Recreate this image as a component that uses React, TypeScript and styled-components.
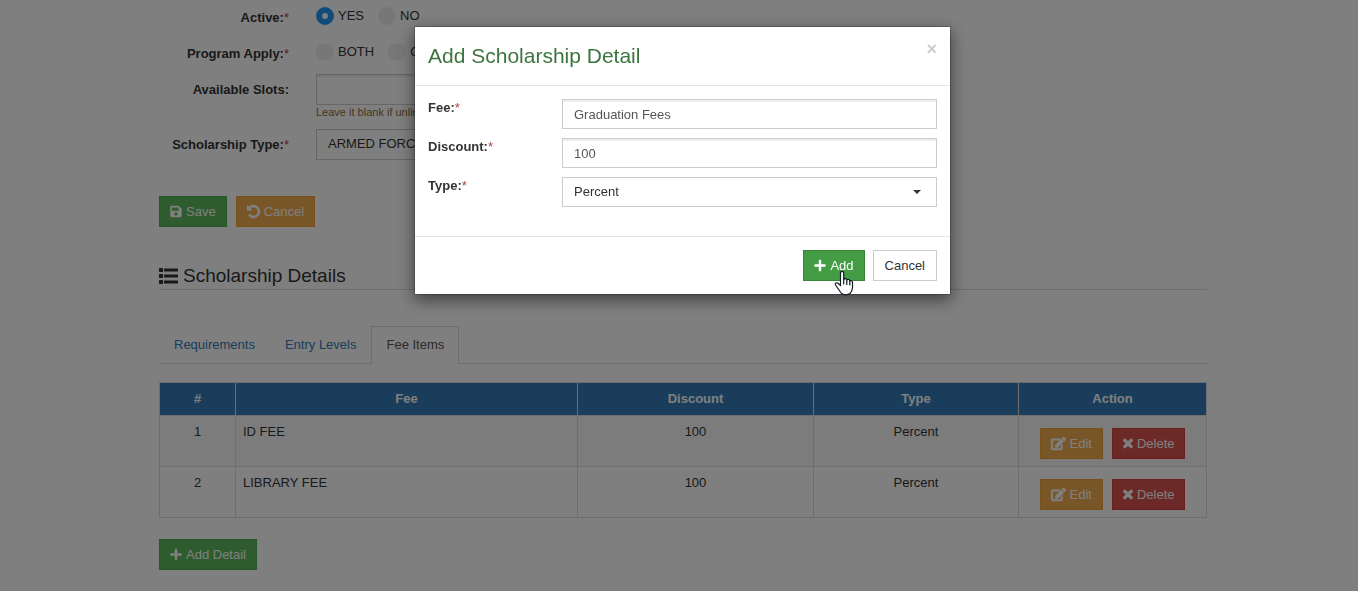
import React from 'react';
import styled, { createGlobalStyle, css } from 'styled-components';
import { FaSave, FaPlus, FaEdit, FaTimes } from 'react-icons/fa';

const GlobalStyle = createGlobalStyle`
  *, *::before, *::after { box-sizing: border-box; }
  html, body { margin: 0; background: #fff; }
  html { overflow: hidden; }
  body {
    font: 13px/18px "Liberation Sans", Arial, Helvetica, sans-serif;
    color: #333;
  }
  button, input, select { font: inherit; margin: 0; border-radius: 0; }
`;

const Page = styled.main`
  padding-left: 8px;
`;

const Container = styled.div`
  max-width: 1048px;
  margin: 0 auto;
`;

const FormRow = styled.div<{ $gap: number }>`
  display: grid;
  grid-template-columns: 130px minmax(0, 360px);
  column-gap: 27px;
  align-items: start;
  margin-bottom: ${p => p.$gap}px;
`;

const labelStyle = css`
  font-weight: bold;
  color: #333;
`;

const FormLabel = styled.label`
  ${labelStyle}
  text-align: right;
  padding-top: 7px;
`;

const GroupLabel = styled.span`
  ${labelStyle}
  text-align: right;
  padding-top: 9px;
`;

const Required = styled.span`
  color: #a94442;
  font-weight: normal;
`;

const RadioGroup = styled.div`
  display: flex;
  gap: 14px;
  padding-top: 7px;
`;

const RadioLabel = styled.label`
  display: flex;
  gap: 4px;
`;

const Radio = styled.input`
  && {
    appearance: none;
    width: 18px;
    height: 18px;
    border-radius: 50%;
    background: #eee;
  }
  &&:checked {
    background: #fff;
    border: 6px solid #2196f3;
  }
`;

const controlStyle = css<{ $tall?: boolean }>`
  display: block;
  width: 100%;
  height: ${p => (p.$tall ? 31 : 30)}px;
  padding: 0 11px;
  border: 1px solid #ccc;
  background: #fff;
`;

const TextInput = styled.input<{ $tall?: boolean }>`
  ${controlStyle}
  color: #555;
  box-shadow: inset 0 2px 1px rgba(0, 0, 0, 0.07);
`;

const SelectWrap = styled.div`
  display: grid;
  align-items: center;
  & > * { grid-area: 1 / 1; }
`;

const Select = styled.select<{ $tall?: boolean }>`
  ${controlStyle}
  appearance: none;
  padding-bottom: 1px;
  color: #333;
`;

const Caret = styled.span`
  justify-self: end;
  margin-right: 16px;
  border: 4px solid transparent;
  border-top-color: #333;
  border-bottom: 0;
  pointer-events: none;
`;

const Help = styled.small`
  display: block;
  font-size: 11px;
  line-height: 15px;
  color: #8a6d3b;
`;

const tones = {
  success: ['#5cb85c', '#4cae4c', '#fff'],
  active: ['#449d44', '#398439', '#fff'],
  warning: ['#f0ad4e', '#eea236', '#fff'],
  danger: ['#d9534f', '#d43f3a', '#fff'],
  plain: ['#fff', '#ccc', '#333'],
};

const Button = styled.button<{ $tone: keyof typeof tones; $icon?: number }>`
  display: inline-flex;
  align-items: center;
  justify-content: center;
  gap: 4px;
  height: 31px;
  padding: 0 ${p => (p.$tone === 'plain' ? 11 : 10)}px;
  white-space: nowrap;
  cursor: pointer;
  background: ${p => tones[p.$tone][0]};
  border: 1px solid ${p => tones[p.$tone][1]};
  color: ${p => tones[p.$tone][2]};
  svg {
    flex: none;
    height: 13px;
    width: ${p => p.$icon ?? 12}px;
    overflow: visible;
  }
`;

const BoldEdit = styled(FaEdit)`
  stroke-width: 22px;
`;

const BoldTimes = styled(FaTimes)`
  stroke-width: 40px;
`;

const ButtonRow = styled.div<{ $center?: boolean }>`
  display: flex;
  gap: 9px;
  justify-content: ${p => (p.$center ? 'center' : 'flex-start')};
`;

const SectionTitle = styled.h2`
  display: flex;
  align-items: center;
  gap: 5px;
  margin: 36px 0;
  height: 27px;
  border-bottom: 1px solid #ddd;
  font-size: 19px;
  line-height: 26px;
  font-weight: normal;
`;

const Tabs = styled.nav`
  display: flex;
  border-bottom: 1px solid #ddd;
  margin-bottom: 18px;
`;

const Tab = styled.a<{ $active?: boolean }>`
  padding: 9px 14px;
  margin-bottom: -1px;
  border: 1px solid ${p => (p.$active ? '#ddd' : 'transparent')};
  border-bottom-color: ${p => (p.$active ? '#fff' : 'transparent')};
  color: ${p => (p.$active ? '#555' : '#337ab7')};
  text-decoration: none;
`;

const Table = styled.table`
  width: 100%;
  table-layout: fixed;
  border-collapse: collapse;
  margin-bottom: 21px;
  th, td { border: 1px solid #ddd; text-align: center; }
  th { background: #337ab7; color: #fff; padding: 7px; height: 33px; }
  td { padding: 7px; vertical-align: top; height: 51px; }
  td:nth-child(2) { text-align: left; }
  tbody tr:nth-child(odd) { background: #f9f9f9; }
`;

const Col = styled.col<{ $width?: number }>`
  width: ${p => (p.$width ? `${p.$width}px` : 'auto')};
`;

const Actions = styled(ButtonRow)`
  padding-top: 5px;
`;

const Backdrop = styled.div`
  position: fixed;
  inset: 0;
  padding: 26px 0 0 7px;
  background: rgba(0, 0, 0, 0.5);
`;

const Modal = styled.div`
  max-width: 537px;
  margin: 0 auto;
  background: #fff;
  background-clip: padding-box;
  border: 1px solid rgba(0, 0, 0, 0.2);
  box-shadow: 0 5px 15px rgba(0, 0, 0, 0.5);
`;

const ModalHeader = styled.header`
  display: flex;
  justify-content: space-between;
  align-items: flex-start;
  padding: 13px;
  border-bottom: 1px solid #e5e5e5;
`;

const ModalTitle = styled.h4`
  margin: 0;
  font-size: 21px;
  line-height: 32px;
  font-weight: normal;
  color: #3c763d;
`;

const Close = styled.button`
  border: 0;
  padding: 0;
  background: none;
  font-size: 18px;
  line-height: 18px;
  font-weight: bold;
  color: #ccc;
`;

const ModalBody = styled.div`
  display: grid;
  row-gap: 9px;
  padding: 13px 13px 29px;
`;

const ModalRow = styled.div`
  display: grid;
  grid-template-columns: 1fr 375px;
  align-items: start;
`;

const ModalLabel = styled.label`
  ${labelStyle}
`;

const ModalFooter = styled.footer`
  display: flex;
  justify-content: flex-end;
  gap: 8px;
  padding: 13px;
  border-top: 1px solid #e5e5e5;
`;

const Pointer = styled.svg`
  position: absolute;
  left: 31px;
  top: 20px;
  pointer-events: none;
`;

const AddWrap = styled.div`
  position: relative;
`;

const UndoIcon = () => (
  <svg viewBox="128 128 1536 1536" fill="currentColor" stroke="currentColor" strokeWidth="50" aria-hidden="true">
    <path d="M1664 896q0 156-61 298t-164 245-245 164-298 61q-172 0-327-72.500t-264-204.500q-7-10-6.500-22.500t8.500-20.500l137-138q10-9 25-9 16 2 23 12 73 95 179 147t225 52q104 0 198.500-40.500t163.500-109.500 109.500-163.500 40.500-198.500-40.500-198.500-109.500-163.500-163.500-109.500-198.500-40.500q-98 0-188 35.500t-160 101.500l137 138q31 30 14 69-17 40-59 40h-448q-26 0-45-19t-19-45v-448q0-42 40-59 39-17 69 14l130 129q107-101 244.500-156.500t284.500-55.500q156 0 298 61t245 164 164 245 61 298z" />
  </svg>
);

const ListIcon = () => (
  <svg width="19" height="16" viewBox="0 0 19 16" fill="currentColor" aria-hidden="true">
    {[0, 6, 12].map(y => (
      <g key={y}>
        <rect x="0" y={y} width="4" height="4" rx="0.5" />
        <rect x="5" y={y + 0.5} width="14" height="3" rx="0.5" />
      </g>
    ))}
  </svg>
);

const items = [
  { fee: 'ID FEE', discount: 100, type: 'Percent' },
  { fee: 'LIBRARY FEE', discount: 100, type: 'Percent' },
];

const Star = () => <Required>*</Required>;

export default function App() {
  return (
    <>
      <GlobalStyle />
      <Page>
        <Container>
          <FormRow $gap={9} role="radiogroup" aria-labelledby="active-label">
            <GroupLabel id="active-label">Active:<Star /></GroupLabel>
            <RadioGroup>
              <RadioLabel><Radio type="radio" name="active" defaultChecked />YES</RadioLabel>
              <RadioLabel><Radio type="radio" name="active" />NO</RadioLabel>
            </RadioGroup>
          </FormRow>
          <FormRow $gap={11} role="radiogroup" aria-labelledby="program-label">
            <GroupLabel id="program-label">Program Apply:<Star /></GroupLabel>
            <RadioGroup>
              <RadioLabel><Radio type="radio" name="program" />BOTH</RadioLabel>
              <RadioLabel><Radio type="radio" name="program" />GRADUATE</RadioLabel>
            </RadioGroup>
          </FormRow>
          <FormRow $gap={9}>
            <FormLabel htmlFor="slots">Available Slots:</FormLabel>
            <div>
              <TextInput id="slots" $tall />
              <Help>Leave it blank if unlimited</Help>
            </div>
          </FormRow>
          <FormRow $gap={36}>
            <FormLabel htmlFor="scholarship">Scholarship Type:<Star /></FormLabel>
            <Select id="scholarship" $tall><option>ARMED FORCES</option></Select>
          </FormRow>
          <ButtonRow>
            <Button $tone="success"><FaSave />Save</Button>
            <Button $tone="warning" $icon={13}><UndoIcon />Cancel</Button>
          </ButtonRow>
          <SectionTitle><ListIcon />Scholarship Details</SectionTitle>
          <Tabs>
            <Tab href="#requirements">Requirements</Tab>
            <Tab href="#levels">Entry Levels</Tab>
            <Tab href="#fees" $active>Fee Items</Tab>
          </Tabs>
          <Table>
            <colgroup>
              <Col $width={76} />
              <Col />
              <Col $width={236} />
              <Col $width={205} />
              <Col $width={188} />
            </colgroup>
            <thead>
              <tr><th>#</th><th>Fee</th><th>Discount</th><th>Type</th><th>Action</th></tr>
            </thead>
            <tbody>
              {items.map((it, i) => (
                <tr key={it.fee}>
                  <td>{i + 1}</td>
                  <td>{it.fee}</td>
                  <td>{it.discount}</td>
                  <td>{it.type}</td>
                  <td>
                    <Actions $center>
                      <Button $tone="warning" $icon={15}><BoldEdit />Edit</Button>
                      <Button $tone="danger" $icon={10}><BoldTimes />Delete</Button>
                    </Actions>
                  </td>
                </tr>
              ))}
            </tbody>
          </Table>
          <Button $tone="success"><FaPlus />Add Detail</Button>
        </Container>
      </Page>
      <Backdrop>
        <Modal role="dialog" aria-labelledby="modal-title">
          <ModalHeader>
            <ModalTitle id="modal-title">Add Scholarship Detail</ModalTitle>
            <Close aria-label="Close">×</Close>
          </ModalHeader>
          <ModalBody>
            <ModalRow>
              <ModalLabel htmlFor="fee">Fee:<Star /></ModalLabel>
              <TextInput id="fee" defaultValue="Graduation Fees" />
            </ModalRow>
            <ModalRow>
              <ModalLabel htmlFor="discount">Discount:<Star /></ModalLabel>
              <TextInput id="discount" defaultValue="100" />
            </ModalRow>
            <ModalRow>
              <ModalLabel htmlFor="type">Type:<Star /></ModalLabel>
              <SelectWrap>
                <Select id="type"><option>Percent</option></Select>
                <Caret />
              </SelectWrap>
            </ModalRow>
          </ModalBody>
          <ModalFooter>
            <AddWrap>
              <Button $tone="active"><FaPlus />Add</Button>
              <Pointer width="20" height="26" viewBox="0 0 20 26" aria-hidden="true">
                <path
                  d="M6.500 15.500V3C6.500 .7 9.700 .7 9.700 3V9.500C10.300 8.200 12.600 8.400 12.800 10C13.600 8.900 15.600 9.300 15.800 11C16.700 10.200 18.500 10.800 18.500 12.500V17.500C18.500 20.500 17.500 22 16 23.500C14 25.200 9 25.200 7.500 23.500C5.500 21 3.500 17.500 1.500 15C.6 13.300 2.500 12.200 4 13.200Z"
                  fill="#fff" stroke="#111827" strokeWidth="1.2" strokeLinejoin="round"
                />
                <path d="M9.700 9v5M12.800 10v4.500M15.800 11v4" stroke="#111827" strokeWidth="1.2" strokeLinecap="round" />
              </Pointer>
            </AddWrap>
            <Button $tone="plain">Cancel</Button>
          </ModalFooter>
        </Modal>
      </Backdrop>
    </>
  );
}
